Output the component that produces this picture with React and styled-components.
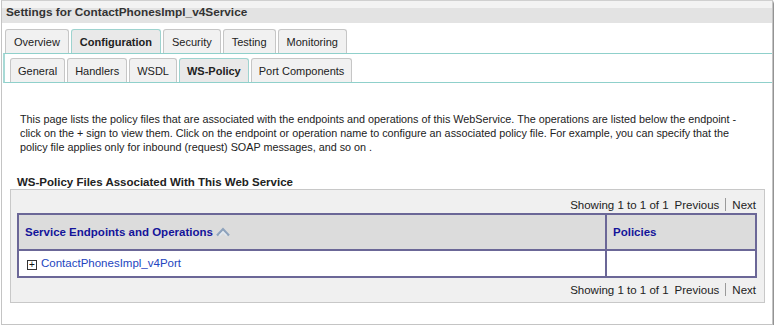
import React from 'react'
import styled, { createGlobalStyle } from 'styled-components'

const GlobalStyle = createGlobalStyle`
    body {
        margin: 0;
        background: #ffffff;
        font-family: "Liberation Sans", Arial, sans-serif;
        font-size: 11px;
        color: #1a1a1a;
    }
`

const mainTabs = ['Overview', 'Configuration', 'Security', 'Testing', 'Monitoring']
const subTabs = ['General', 'Handlers', 'WSDL', 'WS-Policy', 'Port Components']

function SortIcon() {
    return (
        <svg width="14" height="10" viewBox="0 0 14 10">
            <path d="M1 8.5 L7 2 L13 8.5" fill="none" stroke="#8ea3bd" strokeWidth="2.2" />
            <path d="M3.5 8.5 L7 5 L10.5 8.5" fill="none" stroke="#e1e9f2" strokeWidth="1.4" />
        </svg>
    )
}

function Pager({ bottom }) {
    return (
        <PagerRow $bottom={bottom}>
            <span>Showing 1 to 1 of 1</span>
            <PagerLink>Previous</PagerLink>
            <Divider />
            <PagerLink>Next</PagerLink>
        </PagerRow>
    )
}

function App() {
    return (
        <>
            <GlobalStyle />
            <Panel>
                <TitleBar>Settings for ContactPhonesImpl_v4Service</TitleBar>
                <MainTabs>
                    {mainTabs.map((t) => (
                        <Tab key={t} $pad={8} $active={t === 'Configuration'}>{t}</Tab>
                    ))}
                </MainTabs>
                <SubArea>
                    <SubTabs>
                        {subTabs.map((t) => (
                            <Tab key={t} $pad={7} $active={t === 'WS-Policy'}>{t}</Tab>
                        ))}
                    </SubTabs>
                </SubArea>
                <Content>
                    <Intro>
                        This page lists the policy files that are associated with the endpoints and operations of this WebService. The operations are listed below the endpoint - click on the + sign to view them. Click on the endpoint or operation name to configure an associated policy file. For example, you can specify that the policy file applies only for inbound (request) SOAP messages, and so on .
                    </Intro>
                    <SectionTitle>WS-Policy Files Associated With This Web Service</SectionTitle>
                    <TableBox>
                        <Pager />
                        <Table>
                            <thead>
                                <tr>
                                    <Th>
                                        <HeadLabel>
                                            Service Endpoints and Operations
                                            <SortIcon />
                                        </HeadLabel>
                                    </Th>
                                    <Th $narrow>Policies</Th>
                                </tr>
                            </thead>
                            <tbody>
                                <tr>
                                    <Td>
                                        <Expander>+</Expander>
                                        <RowLink>ContactPhonesImpl_v4Port</RowLink>
                                    </Td>
                                    <Td />
                                </tr>
                            </tbody>
                        </Table>
                        <Pager bottom />
                    </TableBox>
                </Content>
            </Panel>
        </>
    )
}

export default App

const Panel = styled.div`
    width: 770px;
    margin-left: 1px;
    border: 1px solid #c4c4c4;
    border-top-color: #d0d0d0;
    box-shadow: 2px 2px 2px #8c8c8c;
    background: #ffffff;
    padding-bottom: 21px;
`
const TitleBar = styled.div`
    height: 22px;
    line-height: 22px;
    padding-left: 4px;
    font-weight: bold;
    font-size: 11.8px;
    color: #333333;
    background: linear-gradient(#f3f3f3 0, #f3f3f3 7px, #e3e3e3 7px, #e3e3e3 100%);
`
const MainTabs = styled.div`
    display: flex;
    gap: 2px;
    padding: 6px 0 0 3px;
`
const Tab = styled.div`
    height: 23px;
    line-height: 24px;
    padding: 0 ${(p) => p.$pad}px;
    font-size: 11px;
    color: #222222;
    font-weight: ${(p) => (p.$active ? 'bold' : 'normal')};
    background: ${(p) => (p.$active ? '#e9e9e9' : '#f1f1f1')};
    border: 1px solid ${(p) => (p.$active ? '#9ed3cf' : '#c6c6c6')};
    border-bottom: none;
    border-radius: 3px 3px 0 0;
`
const SubArea = styled.div`
    border-top: 1px solid #8fd0cb;
    border-bottom: 1px solid #8fd0cb;
    border-left: 2px solid #a8dad6;
    margin-left: 1px;
`
const SubTabs = styled.div`
    display: flex;
    gap: 2px;
    padding: 4px 0 0 5px;
`
const Content = styled.div`
    padding: 29px 8px 0 8px;
`
const Intro = styled.p`
    margin: 0 0 0 10px;
    max-width: 722px;
    line-height: 14px;
    font-size: 10.8px;
    color: #222222;
`
const SectionTitle = styled.div`
    margin: 21px 0 0 7px;
    line-height: 14px;
    font-weight: bold;
    font-size: 11.5px;
    color: #222222;
`
const TableBox = styled.div`
    margin-top: 0;
    background: #f0f0f0;
    border: 1px solid #c8c8c8;
    padding: 6px 7px 4px 6px;
    width: 740px;
`
const PagerRow = styled.div`
    display: flex;
    justify-content: flex-end;
    align-items: center;
    gap: 6px;
    height: 17px;
    margin-top: ${(p) => (p.$bottom ? '3px' : '0')};
    padding-right: 1px;
    font-size: 11.5px;
    color: #222222;
`
const PagerLink = styled.span`
    color: #222222;
`
const Divider = styled.span`
    width: 1px;
    height: 13px;
    background: #9a9a9a;
`
const Table = styled.table`
    width: 100%;
    border-collapse: collapse;
    border: 2px solid #6b6797;
    background: #ffffff;
`
const Th = styled.th`
    height: 34px;
    padding: 0 6px;
    text-align: left;
    font-size: 11.5px;
    font-weight: bold;
    color: #14149a;
    background: #dcdcdc;
    border: 2px solid #6b6797;
    width: ${(p) => (p.$narrow ? '136px' : 'auto')};
`
const HeadLabel = styled.span`
    display: inline-flex;
    align-items: center;
    gap: 3px;
`
const Td = styled.td`
    height: 25px;
    padding: 0 6px 0 8px;
    border: 2px solid #6b6797;
    font-size: 11.5px;
`
const Expander = styled.span`
    display: inline-block;
    width: 8px;
    height: 8px;
    border: 1px solid #333333;
    line-height: 7px;
    text-align: center;
    font-size: 10px;
    color: #111111;
    margin-right: 4px;
    vertical-align: -1px;
`
const RowLink = styled.span`
    color: #2345c0;
`
